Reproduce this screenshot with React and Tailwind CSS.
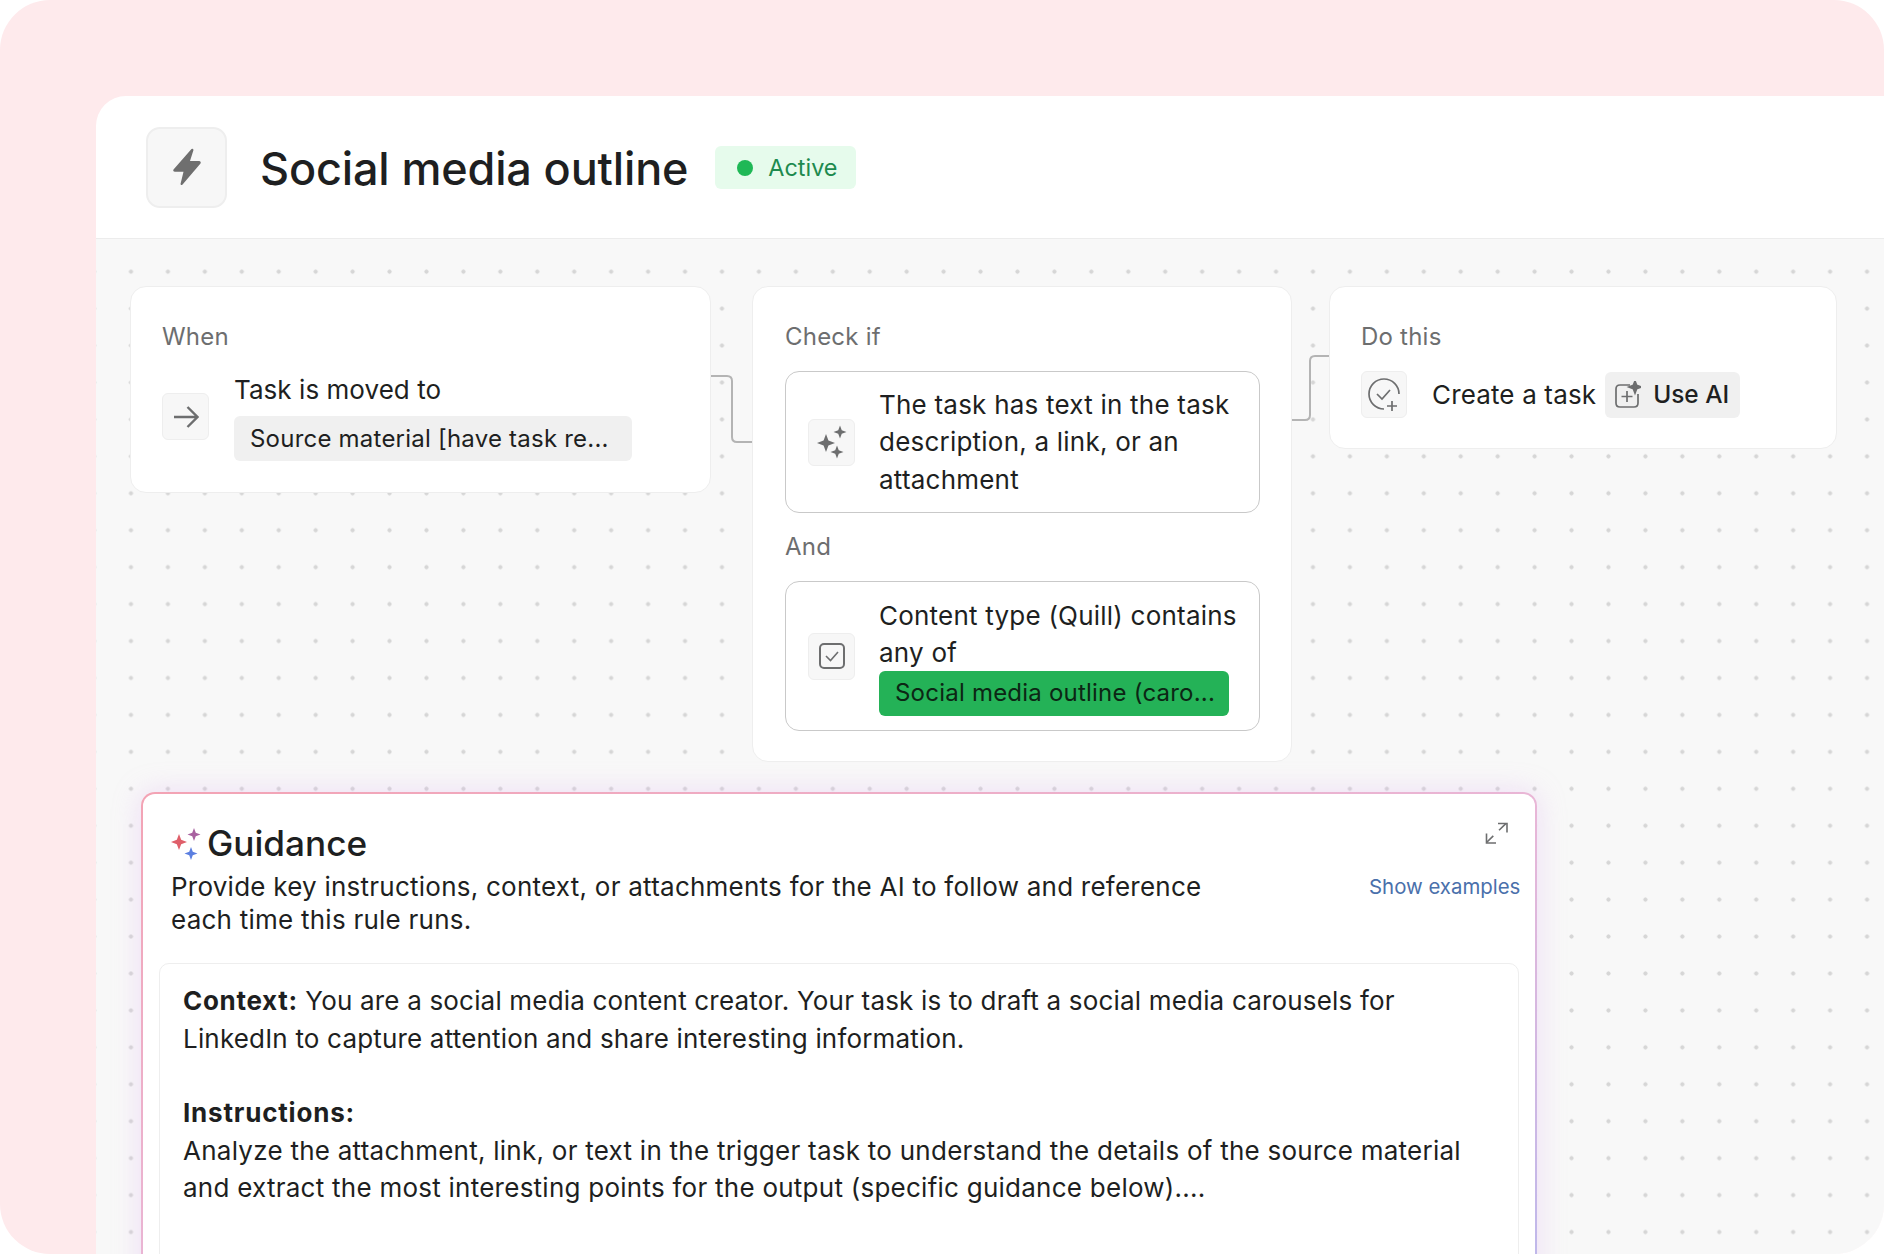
const font = { fontFamily: 'Inter, "Liberation Sans", sans-serif' };

function Spark({ cx, cy, r, fill }) {
  const k = r * 0.27;
  return (
    <path
      fill={fill}
      d={`M${cx} ${cy - r} L${cx + k} ${cy - k} L${cx + r} ${cy} L${cx + k} ${cy + k} L${cx} ${cy + r} L${cx - k} ${cy + k} L${cx - r} ${cy} L${cx - k} ${cy - k} Z`}
    />
  );
}

function IconBox({ children, className }) {
  return (
    <div className={`shrink-0 flex items-center justify-center rounded-md border border-[#eeeeee] bg-[#f7f7f7] ${className}`}>
      {children}
    </div>
  );
}

function Connector({ width, height, d, className }) {
  return (
    <svg width={width} height={height} viewBox={`0 0 ${width} ${height}`} fill="none" className={`shrink-0 ${className}`}>
      <path d={d} stroke="#b4b4b4" strokeWidth="2" />
    </svg>
  );
}

export default function App() {
  return (
    <div style={font} className="w-[1884px] h-[1254px] overflow-hidden bg-white">
      <div className="w-full h-full rounded-[50px] bg-[#feeaec] pl-[96px] pt-[96px] overflow-hidden">
        <div className="w-[1788px] h-[1158px] rounded-tl-[30px] overflow-hidden flex flex-col bg-white">
          <header className="h-[143px] shrink-0 border-b-[1.5px] border-[#ececec] flex items-center pl-[50px]">
            <div className="w-[81px] h-[81px] rounded-[14px] border-2 border-[#eeeeee] bg-[#f7f7f7] flex items-center justify-center">
              <svg width="32" height="38" viewBox="0 0 32 38">
                <path fill="#6f6f6f" d="M20.5 1 L2.5 21.5 Q1.5 23.5 4 23.8 L12.5 23.8 L9.5 36 Q10 38 11.8 36.2 L29.5 15.5 Q30.5 13.5 28 13 L19 13 L22.5 2 Q22 0 20.5 1 Z" />
              </svg>
            </div>
            <h1 className="ml-[33px] mt-[2px] text-[45px] leading-none tracking-[-0.15px] font-medium text-[#1e1f21]">Social media outline</h1>
            <div className="ml-[27px] mt-[1px] w-[141px] h-[43px] rounded-md bg-[#e6fbec] flex items-center pl-[22px]">
              <span className="w-[16px] h-[16px] rounded-full bg-[#1fb856]" />
              <span className="ml-[15px] text-[23.4px] leading-none text-[#1d8a4e]">Active</span>
            </div>
          </header>

          <main className="flex-1 bg-[#f8f8f8] bg-[radial-gradient(circle,#d6d6d6_1.8px,transparent_2.4px)] bg-[size:36.94px_36.94px] bg-[position:16.5px_14.2px] pl-[34px] pt-[47px]">
            <div className="flex items-start h-[476px] tracking-[0.22px]">
              <section className="w-[581px] h-[207px] rounded-2xl border border-[#eeeeee] bg-white pl-[31px] pt-[35px]">
                <div className="text-[24px] leading-[30px] text-[#6d6e6f]">When</div>
                <div className="flex items-center mt-[20px]">
                  <IconBox className="w-[47px] h-[47px]">
                    <svg width="26" height="24" viewBox="0 0 26 24" fill="none" stroke="#6d6e6f" strokeWidth="2.4">
                      <path d="M1 12h23M14.5 2l10 10-10 10" />
                    </svg>
                  </IconBox>
                  <div className="ml-[25px]">
                    <div className="text-[26px] leading-[36px] tracking-[0.05px] text-[#1e1f21]">Task is moved to</div>
                    <div className="mt-[8px] w-[398px] h-[45px] rounded-md bg-[#f0f0f0] flex items-center pl-[16px] text-[24px] text-[#1e1f21]">Source material [have task re...</div>
                  </div>
                </div>
              </section>

              <Connector width={41} height={70} className="mt-[88px]" d="M0 2H16Q21 2 21 7V63Q21 68 26 68H41" />

              <section className="w-[540px] h-[476px] rounded-2xl border border-[#eeeeee] bg-white pl-[32px] pr-[31px] pt-[35px]">
                <div className="text-[24px] leading-[30px] text-[#6d6e6f]">Check if</div>
                <div className="mt-[19px] h-[142px] rounded-[14px] border-[1.5px] border-[#c9c9c9] flex items-center pl-[22px]">
                  <IconBox className="w-[47px] h-[47px]">
                    <svg width="32" height="34" viewBox="0 0 32 34">
                      <Spark cx={10} cy={18} r={9} fill="#6d6e6f" />
                      <Spark cx={24} cy={7} r={6.5} fill="#6d6e6f" />
                      <Spark cx={21} cy={27} r={6.5} fill="#6d6e6f" />
                    </svg>
                  </IconBox>
                  <div className="ml-[24px] w-[370px] text-[26px] leading-[37.5px] text-[#1e1f21]">The task has text in the task description, a link, or an attachment</div>
                </div>
                <div className="mt-[19px] text-[24px] leading-[30px] text-[#6d6e6f]">And</div>
                <div className="mt-[19px] h-[150px] rounded-[14px] border-[1.5px] border-[#c9c9c9] flex items-center pl-[22px]">
                  <IconBox className="w-[47px] h-[47px]">
                    <svg width="28" height="28" viewBox="0 0 28 28" fill="none" stroke="#6d6e6f" strokeWidth="2">
                      <rect x="2" y="2" width="24" height="24" rx="4" />
                      <path d="M8 14l4.5 4.5L20 10" strokeWidth="1.6" />
                    </svg>
                  </IconBox>
                  <div className="ml-[24px]">
                    <div className="w-[370px] text-[26px] leading-[37.5px] text-[#1e1f21]">Content type (Quill) contains any of</div>
                    <div className="-mt-[1px] w-[350px] h-[45px] rounded-md bg-[#24b257] flex items-center pl-[16px] text-[24px] text-[#0c2614]">Social media outline (caro...</div>
                  </div>
                </div>
              </section>

              <Connector width={37} height={68} className="mt-[68px]" d="M0 66H13Q18 66 18 61V7Q18 2 23 2H37" />

              <section className="w-[508px] h-[163px] rounded-2xl border border-[#eeeeee] bg-white pl-[31px] pt-[35px]">
                <div className="text-[24px] leading-[30px] text-[#6d6e6f]">Do this</div>
                <div className="flex items-center mt-[19px]">
                  <IconBox className="w-[46px] h-[47px]">
                    <svg width="34" height="36" viewBox="0 0 34 36" fill="none" stroke="#6d6e6f" strokeWidth="1.7">
                      <path d="M17 32A15 15 0 1 1 32 17" />
                      <path d="M10 17l5 5 8-9M25 24v10M20 29h10" />
                    </svg>
                  </IconBox>
                  <div className="ml-[25px] text-[26px] leading-none tracking-[0.15px] text-[#1e1f21]">Create a task</div>
                  <div className="ml-[9px] w-[135px] h-[46px] rounded-md bg-[#f0f0f0] flex items-center pl-[10px]">
                    <svg width="26" height="28" viewBox="0 0 26 28" fill="none" stroke="#6d6e6f" strokeWidth="1.7">
                      <path d="M15 4H5Q1 4 1 8V22Q1 26 5 26H19Q23 26 23 22V13" />
                      <path d="M12 10v11M6.5 15.5h11" />
                      <Spark cx={20} cy={6} r={6} fill="#6d6e6f" />
                    </svg>
                    <span className="ml-[12px] text-[24.4px] leading-none font-medium tracking-normal text-[#1e1f21]">Use AI</span>
                  </div>
                </div>
              </section>
            </div>

            <section className="ml-[11px] mt-[30px] w-[1396px] h-[500px] rounded-t-[14px] p-[2px] pb-0 bg-gradient-to-br from-[#f3a3b4] via-[#e9b6d6] to-[#bcb8ec] shadow-[0_0_28px_rgba(222,170,240,0.35)]">
              <div className="h-full rounded-t-[12px] bg-white px-[16px] pt-[30px]">
                <div className="flex tracking-[0.24px]">
                  <div className="w-[1210px] shrink-0">
                    <div className="flex items-center h-[40px] pl-[12px]">
                      <svg width="30" height="32" viewBox="0 0 30 32">
                        <Spark cx={8} cy={14} r={8} fill="#df5f6a" />
                        <Spark cx={23} cy={6.5} r={6.5} fill="#a862a0" />
                        <Spark cx={20} cy={25.5} r={6.5} fill="#5b7fe0" />
                      </svg>
                      <span className="ml-[6px] text-[35.2px] leading-none tracking-normal font-medium text-[#1e1f21]">Guidance</span>
                    </div>
                    <p className="pl-[12px] mt-[6px] w-[1090px] text-[26px] leading-[33px] text-[#1e1f21]">Provide key instructions, context, or attachments for the AI to follow and reference each time this rule runs.</p>
                  </div>
                  <div className="flex-1 flex flex-col items-end">
                    <svg width="23" height="22" viewBox="0 0 23 22" fill="none" stroke="#6d6e6f" strokeWidth="1.6" className="mr-[13px] -mt-[2px] shrink-0">
                      <path d="M1.5 20.5L21 1.5" strokeDasharray="9.5 8" />
                      <path d="M13 1.5h9v9M1.5 11.5v9.5h9.5" />
                    </svg>
                    <a className="mt-[28px] mr-[1px] whitespace-nowrap text-[20.4px] leading-[30px] tracking-normal text-[#4a70ab]">Show examples</a>
                  </div>
                </div>
                <div className="mt-[27px] h-[400px] rounded-t-[10px] border border-[#eeeeee] pl-[23px] pt-[18px] text-[26px] leading-[37.5px] text-[#1e1f21]">
                  <p className="w-[1300px] tracking-[0.18px]"><strong className="font-bold tracking-[0.7px]">Context:</strong> You are a social media content creator. Your task is to draft a social media carousels for LinkedIn to capture attention and share interesting information.</p>
                  <p className="mt-[37px] font-bold tracking-[0.8px]">Instructions:</p>
                  <p className="w-[1300px] tracking-[0.25px]">Analyze the attachment, link, or text in the trigger task to understand the details of the source material and extract the most interesting points for the output (specific guidance below)....</p>
                </div>
              </div>
            </section>
          </main>
        </div>
      </div>
    </div>
  );
}
